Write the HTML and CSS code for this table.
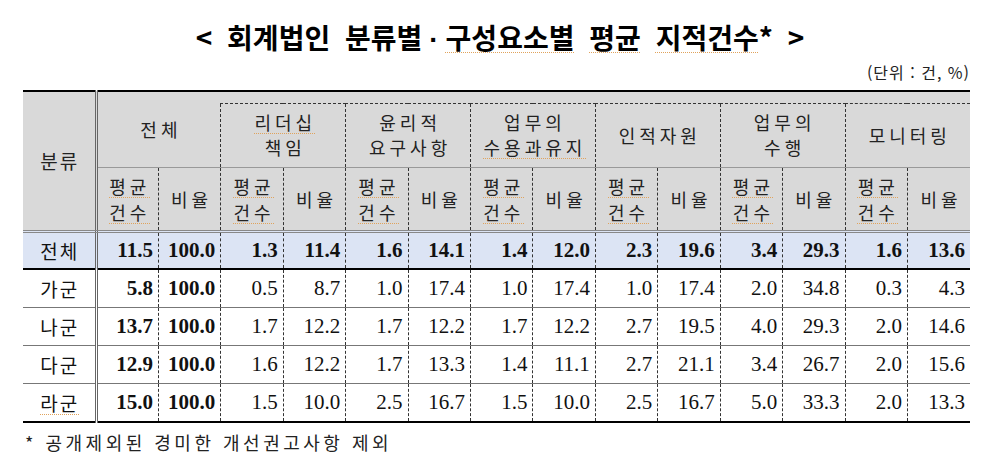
FILE: index.html
```html
<!DOCTYPE html>
<html lang="ko">
<head>
<meta charset="utf-8">
<title>회계법인 분류별 · 구성요소별 평균 지적건수</title>
<link rel="stylesheet" href="styles.css">
</head>
<body>
<div class="page">
  <h1 class="title">&lt; 회계법인 분류별<span class="dot">·</span><span class="sp">구성요소별</span> <span class="sp">평균</span> <span class="sp">지적건수</span>* &gt;</h1>
  <p class="unit">(단위 : 건, %)</p>
  <table class="stat">
    <colgroup><col class="c-cat"><col span="14"></colgroup>
    <thead>
      <tr class="r-sp">
        <th class="cat" rowspan="3">분류</th>
        <th class="grp g-all" rowspan="2" colspan="2">전체</th>
        <td class="sp-cell" colspan="12"></td>
      </tr>
      <tr class="r-g">
        <th class="grp" colspan="2"><span class="sp">리더십</span><br>책임</th>
        <th class="grp" colspan="2">윤리적<br>요구사항</th>
        <th class="grp" colspan="2">업무의<br><span class="sp">수용과유지</span></th>
        <th class="grp" colspan="2">인적자원</th>
        <th class="grp" colspan="2">업무의<br>수행</th>
        <th class="grp" colspan="2">모니터링</th>
      </tr>
      <tr class="r-sub">
        <th><span class="sp">평균</span><br><span class="sp">건수</span></th><th>비율</th>
        <th><span class="sp">평균</span><br><span class="sp">건수</span></th><th>비율</th>
        <th><span class="sp">평균</span><br><span class="sp">건수</span></th><th>비율</th>
        <th><span class="sp">평균</span><br><span class="sp">건수</span></th><th>비율</th>
        <th><span class="sp">평균</span><br><span class="sp">건수</span></th><th>비율</th>
        <th><span class="sp">평균</span><br><span class="sp">건수</span></th><th>비율</th>
        <th><span class="sp">평균</span><br><span class="sp">건수</span></th><th>비율</th>
      </tr>
    </thead>
    <tbody>
      <tr class="total">
        <td class="lab">전체</td>
        <td class="b">11.5</td><td class="b">100.0</td><td>1.3</td><td>11.4</td><td>1.6</td><td>14.1</td><td>1.4</td><td>12.0</td><td>2.3</td><td>19.6</td><td>3.4</td><td>29.3</td><td>1.6</td><td>13.6</td>
      </tr>
      <tr>
        <td class="lab">가군</td>
        <td class="b">5.8</td><td class="b">100.0</td><td>0.5</td><td>8.7</td><td>1.0</td><td>17.4</td><td>1.0</td><td>17.4</td><td>1.0</td><td>17.4</td><td>2.0</td><td>34.8</td><td>0.3</td><td>4.3</td>
      </tr>
      <tr>
        <td class="lab">나군</td>
        <td class="b">13.7</td><td class="b">100.0</td><td>1.7</td><td>12.2</td><td>1.7</td><td>12.2</td><td>1.7</td><td>12.2</td><td>2.7</td><td>19.5</td><td>4.0</td><td>29.3</td><td>2.0</td><td>14.6</td>
      </tr>
      <tr>
        <td class="lab">다군</td>
        <td class="b">12.9</td><td class="b">100.0</td><td>1.6</td><td>12.2</td><td>1.7</td><td>13.3</td><td>1.4</td><td>11.1</td><td>2.7</td><td>21.1</td><td>3.4</td><td>26.7</td><td>2.0</td><td>15.6</td>
      </tr>
      <tr>
        <td class="lab"><span class="sp">라군</span></td>
        <td class="b">15.0</td><td class="b">100.0</td><td>1.5</td><td>10.0</td><td>2.5</td><td>16.7</td><td>1.5</td><td>10.0</td><td>2.5</td><td>16.7</td><td>5.0</td><td>33.3</td><td>2.0</td><td>13.3</td>
      </tr>
    </tbody>
  </table>
  <p class="note">* <span class="sp">공개제외된</span> <span class="sp">경미한</span> <span class="sp">개선권고사항</span> 제외</p>
</div>
</body>
</html>
```
FILE: styles.css
```css
html, body {
  margin: 0;
  padding: 0;
  background: #ffffff;
}

body {
  font-family: "Noto Sans CJK KR", "Noto Sans", sans-serif;
  color: #111;
}

.page {
  width: 1000px;
}

.title {
  margin: 0;
  padding: 20px 0 4px;
  height: 34px;
  line-height: 34px;
  font-size: 28px;
  font-weight: 700;
  text-align: center;
  word-spacing: 7px;
  color: #000;
  overflow: visible;
}

.title .dot {
  font-family: "Liberation Sans", Arial, sans-serif;
  line-height: 1;
  margin: 0 7px;
}

.sp {
  text-decoration: underline dotted #e0a35c;
  text-underline-offset: 3px;
  text-decoration-thickness: 1px;
}

.unit {
  margin: 0 0 0 23px;
  width: 947px;
  padding: 4px 0 8px;
  height: 20px;
  line-height: 20px;
  font-size: 16px;
  letter-spacing: 1px;
  text-align: right;
  color: #222;
}

.stat {
  margin-left: 23px;
  width: 947px;
  border-collapse: collapse;
  table-layout: fixed;
  border-top: 2px solid #000;
  border-bottom: 2px solid #000;
}

.c-cat {
  width: 73px;
}

.stat th,
.stat td {
  padding: 0;
}

.stat thead th,
.stat thead td {
  background: #d9d9d9;
  font-weight: 400;
  font-size: 18px;
  letter-spacing: 4px;
  color: #222;
  text-align: center;
  vertical-align: middle;
}

.stat thead th {
  padding-left: 4px;
}

.stat .cat {
  border-right: 3px double #666;
  border-bottom: 3px double #888;
  letter-spacing: 2px;
  font-size: 19px;
  padding-left: 2px;
}

.r-sp {
  height: 12px;
}

.sp-cell {
  border-bottom: 1px dashed #333;
}

.g-all {
  border-bottom: 1px solid #999;
  line-height: 25px;
}

.r-g th {
  height: 63px;
  line-height: 25px;
  border-left: 1px dashed #333;
  border-bottom: 1px solid #999;
}

.r-sub th {
  height: 62px;
  line-height: 26px;
  border-left: 1px dashed #333;
  border-bottom: 3px double #888;
}

.stat tbody td {
  height: 37px;
  border-left: 1px dashed #333;
  border-bottom: 1px solid #777;
  font-family: "Liberation Serif", "Times New Roman", serif;
  font-size: 21px;
  text-align: right;
  padding-right: 5px;
  color: #111;
}

.stat tbody td.lab {
  font-family: "Noto Sans CJK KR", sans-serif;
  font-size: 19px;
  letter-spacing: 2px;
  text-align: center;
  padding: 0 0 0 2px;
  border-left: none;
  border-right: 3px double #666;
}

.stat tbody td.b {
  font-weight: 700;
}

.stat tbody tr.total td {
  height: 35px;
  background: #dce4f4;
  border-bottom: 2px solid #000;
  font-weight: 700;
}

.stat tbody tr.total td.lab {
  font-weight: 400;
}

.stat tbody tr:last-child td {
  border-bottom: 2px solid #000;
}

.note {
  margin: 8px 0 0 25px;
  font-size: 18px;
  letter-spacing: 3.5px;
  line-height: 22px;
  color: #222;
}
```
